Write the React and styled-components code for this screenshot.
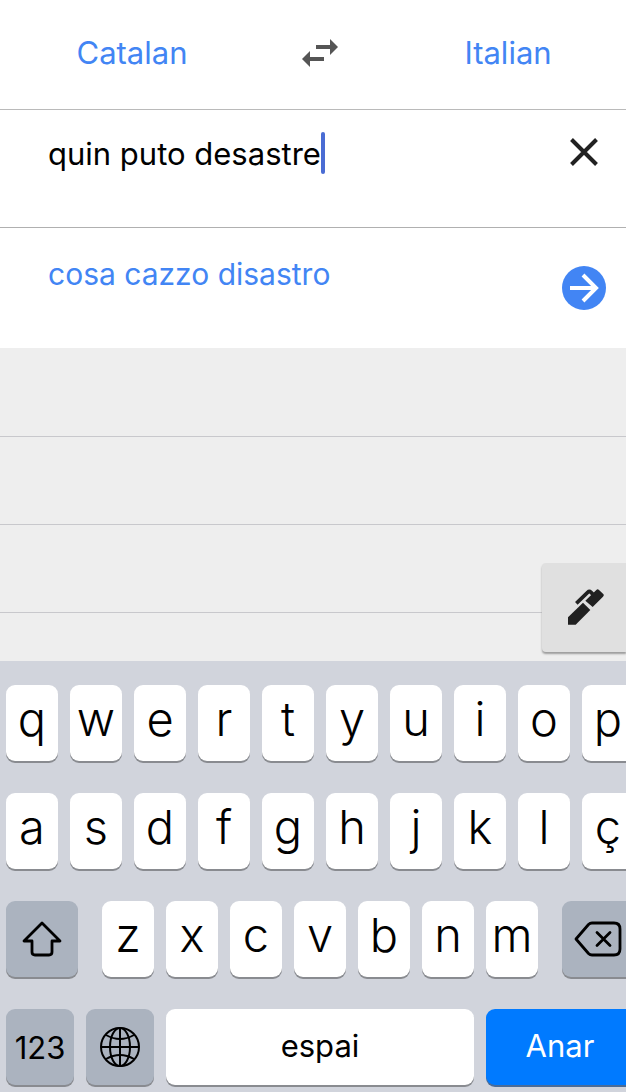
import React, { useState } from 'react';
import styled, { createGlobalStyle } from 'styled-components'

const GlobalStyle = createGlobalStyle`
  * {
    box-sizing: border-box;
  }
  body {
    margin: 0;
    background: #ffffff;
    font-family: Inter, "Liberation Sans", sans-serif;
    overflow-x: hidden;
  }
  button, input {
    font: inherit;
    border: none;
    padding: 0;
    margin: 0;
    background: none;
    outline: none;
  }
  button {
    cursor: pointer;
  }
  svg {
    display: block;
    flex: none;
  }
`

const Page = styled.main`
  overflow: hidden;
`

const LanguageBar = styled.header`
  display: grid;
  grid-template-columns: 1fr 112px 1fr;
  height: 110px;
  margin-right: -14px;
  padding-bottom: 3px;
  border-bottom: 1px solid #bababa;
`

const LanguageButton = styled.button`
  color: #4285f4;
  font-size: 31px;
  line-height: 40px;
`

const SwapButton = styled.button`
  display: flex;
  align-items: center;
  justify-content: center;
`

const SourcePanel = styled.section`
  display: flex;
  align-items: flex-start;
  justify-content: space-between;
  height: 118px;
  padding: 22px 20px 0 48px;
  border-bottom: 1px solid #b0b0b0;
`

const Field = styled.label`
  display: flex;
  align-items: center;
`

const SourceInput = styled.input`
  field-sizing: content;
  height: 42px;
  color: #000000;
  font-size: 31px;
  caret-color: transparent;
`

const Caret = styled.span`
  width: 4px;
  height: 42px;
  border-radius: 2px;
  background: #4a6cd4;
`

const IconButton = styled.button`
  display: flex;
  align-items: center;
  justify-content: center;
  width: 44px;
  height: 40px;
`

const ResultPanel = styled.section`
  display: flex;
  align-items: flex-start;
  justify-content: space-between;
  height: 120px;
  padding: 26px 20px 0 48px;
`

const Translation = styled.p`
  margin: 0;
  color: #4285f4;
  font-size: 30px;
  line-height: 40px;
`

const GoButton = styled.button`
  display: flex;
  align-items: center;
  justify-content: center;
  width: 44px;
  height: 44px;
  margin-top: 12px;
  border-radius: 50%;
  background: #4285f4;
`

const History = styled.section`
  position: relative;
  background: #eeeeee;
`

const HistoryRow = styled.div`
  height: ${props => props.$last ? "49px" : "88px"};
  border-top: ${props => props.$first ? "none" : "1px solid #c8c8cc"};
`

const PenButton = styled.button`
  position: absolute;
  right: 0;
  bottom: 9px;
  display: flex;
  align-items: center;
  justify-content: center;
  width: 84px;
  height: 89px;
  padding: 0 0 2px 4px;
  border-radius: 4px 0 0 4px;
  background: #e0e0e0;
  box-shadow: 0 2px 2px #9c9c9c;
`

const Keyboard = styled.section`
  display: flex;
  flex-direction: column;
  gap: 32px;
  padding: 24px 0 7px 6px;
  margin-right: -8px;
  background: #d1d4dc;
`

const KeyRow = styled.div`
  display: flex;
  gap: ${props => props.$wide ? "24px" : "12px"};
`

const Letters = styled.div`
  display: flex;
  flex: 1;
  gap: 12px;
`

const Key = styled.button`
  flex: 1;
  min-width: 0;
  height: 76px;
  padding-bottom: 8px;
  border-radius: 9px;
  background: #ffffff;
  box-shadow: 0 2px 0 #898b90;
  color: #000000;
  font-size: 47px;
  font-weight: 300;
  line-height: 60px;
`

const WordKey = styled(Key)`
  padding-bottom: 2px;
  font-size: 31px;
  font-weight: 400;
  line-height: 40px;
`

const GoKey = styled(WordKey)`
  flex: none;
  width: 148px;
  background: #007aff;
  color: #ffffff;
  box-shadow: 0 2px 0 #4a6c98;
`

const FunctionKey = styled(WordKey)`
  display: flex;
  flex: none;
  align-items: center;
  justify-content: center;
  width: ${props => props.$wide ? "72px" : "68px"};
  padding: 2px 0 0;
  background: #abb3bf;
`

const SwapIcon = () => (
  <svg width="36" height="28" viewBox="0 0 36 28" fill="#555555">
    <path d="M14 6H28V0L36 8L28 16V10H14Z" />
    <path d="M22 18H8V12L0 20L8 28V22H22Z" />
  </svg>
)

const CloseIcon = () => (
  <svg width="28" height="28" viewBox="0 0 28 28" stroke="#212121" strokeWidth="4">
    <path d="M1.5 1.5L26.5 26.5M26.5 1.5L1.5 26.5" />
  </svg>
)

const ArrowIcon = () => (
  <svg width="44" height="44" viewBox="0 0 44 44" fill="none" stroke="#ffffff" strokeWidth="4">
    <path d="M8 22H34M21 9L34 22L21 35" />
  </svg>
)

const PenIcon = () => (
  <svg width="36" height="36" viewBox="0 0 108 108" fill="#212121">
    <path d="M0 85L45 41L67 63L23 107H0Z" />
    <path d="M52 35L85 3Q89 -1 93 3L105 14Q110 18 105 23L74 54Z" />
    <path d="M25 43L59 10Q64 5 69 10L78 19" fill="none" stroke="#212121" strokeWidth="11" />
  </svg>
)

const ShiftIcon = () => (
  <svg width="40" height="38" viewBox="0 0 40 38" fill="none" stroke="#000000" strokeWidth="2.8" strokeLinejoin="round">
    <path d="M20 2L38 20H30V31Q30 34 27 34H13Q10 34 10 31V20H2Z" />
  </svg>
)

const DeleteIcon = () => (
  <svg width="48" height="38" viewBox="0 0 48 38" fill="none" stroke="#000000" strokeWidth="2.8" strokeLinejoin="round" strokeLinecap="round">
    <path d="M18 2H40Q46 2 46 8V28Q46 34 40 34H18Q16 34 14.5 32.5L2 18L14.5 3.5Q16 2 18 2Z" />
    <path d="M23 11.5L36 24.5M36 11.5L23 24.5" />
  </svg>
)

const GlobeIcon = () => (
  <svg width="40" height="42" viewBox="0 0 40 42" fill="none" stroke="#000000" strokeWidth="2">
    <circle cx="20" cy="20" r="19" />
    <ellipse cx="20" cy="20" rx="10" ry="19" />
    <path d="M20 1V39M1 20H39" />
    <path d="M6 8Q20 16 34 8M6 32Q20 24 34 32" />
  </svg>
)

const TOP_ROW = ["q", "w", "e", "r", "t", "y", "u", "i", "o", "p"]
const HOME_ROW = ["a", "s", "d", "f", "g", "h", "j", "k", "l", "ç"]
const LOW_ROW = ["z", "x", "c", "v", "b", "n", "m"]

function App() {

  const [text, setText] = useState("quin puto desastre");
  const [languages, setLanguages] = useState(["Catalan", "Italian"]);

  const type = (char) => setText(text + char)

  const renderKeys = (keys) => keys.map(key => (
    <Key key={key} type="button" onClick={() => type(key)}>{key}</Key>
  ))

  return (
    <>
      <GlobalStyle />
      <Page>
        <LanguageBar>
          <LanguageButton type="button">{languages[0]}</LanguageButton>
          <SwapButton type="button" aria-label="Swap languages" onClick={() => setLanguages([languages[1], languages[0]])}>
            <SwapIcon />
          </SwapButton>
          <LanguageButton type="button">{languages[1]}</LanguageButton>
        </LanguageBar>
        <SourcePanel>
          <Field>
            <SourceInput aria-label="Text to translate" value={text} onChange={(e) => setText(e.target.value)} />
            <Caret />
          </Field>
          <IconButton type="button" aria-label="Clear" onClick={() => setText("")}><CloseIcon /></IconButton>
        </SourcePanel>
        <ResultPanel>
          <Translation>cosa cazzo disastro</Translation>
          <GoButton type="button" aria-label="Translate"><ArrowIcon /></GoButton>
        </ResultPanel>
        <History>
          <HistoryRow $first />
          <HistoryRow />
          <HistoryRow />
          <HistoryRow $last />
          <PenButton type="button" aria-label="Handwriting"><PenIcon /></PenButton>
        </History>
        <Keyboard>
          <KeyRow>{renderKeys(TOP_ROW)}</KeyRow>
          <KeyRow>{renderKeys(HOME_ROW)}</KeyRow>
          <KeyRow $wide>
            <FunctionKey $wide type="button" aria-label="Shift"><ShiftIcon /></FunctionKey>
            <Letters>{renderKeys(LOW_ROW)}</Letters>
            <FunctionKey $wide type="button" aria-label="Delete" onClick={() => setText(text.slice(0, -1))}>
              <DeleteIcon />
            </FunctionKey>
          </KeyRow>
          <KeyRow>
            <FunctionKey type="button">123</FunctionKey>
            <FunctionKey type="button" aria-label="Next keyboard"><GlobeIcon /></FunctionKey>
            <WordKey type="button" onClick={() => type(" ")}>espai</WordKey>
            <GoKey type="button">Anar</GoKey>
          </KeyRow>
        </Keyboard>
      </Page>
    </>
  )
}

export default App
